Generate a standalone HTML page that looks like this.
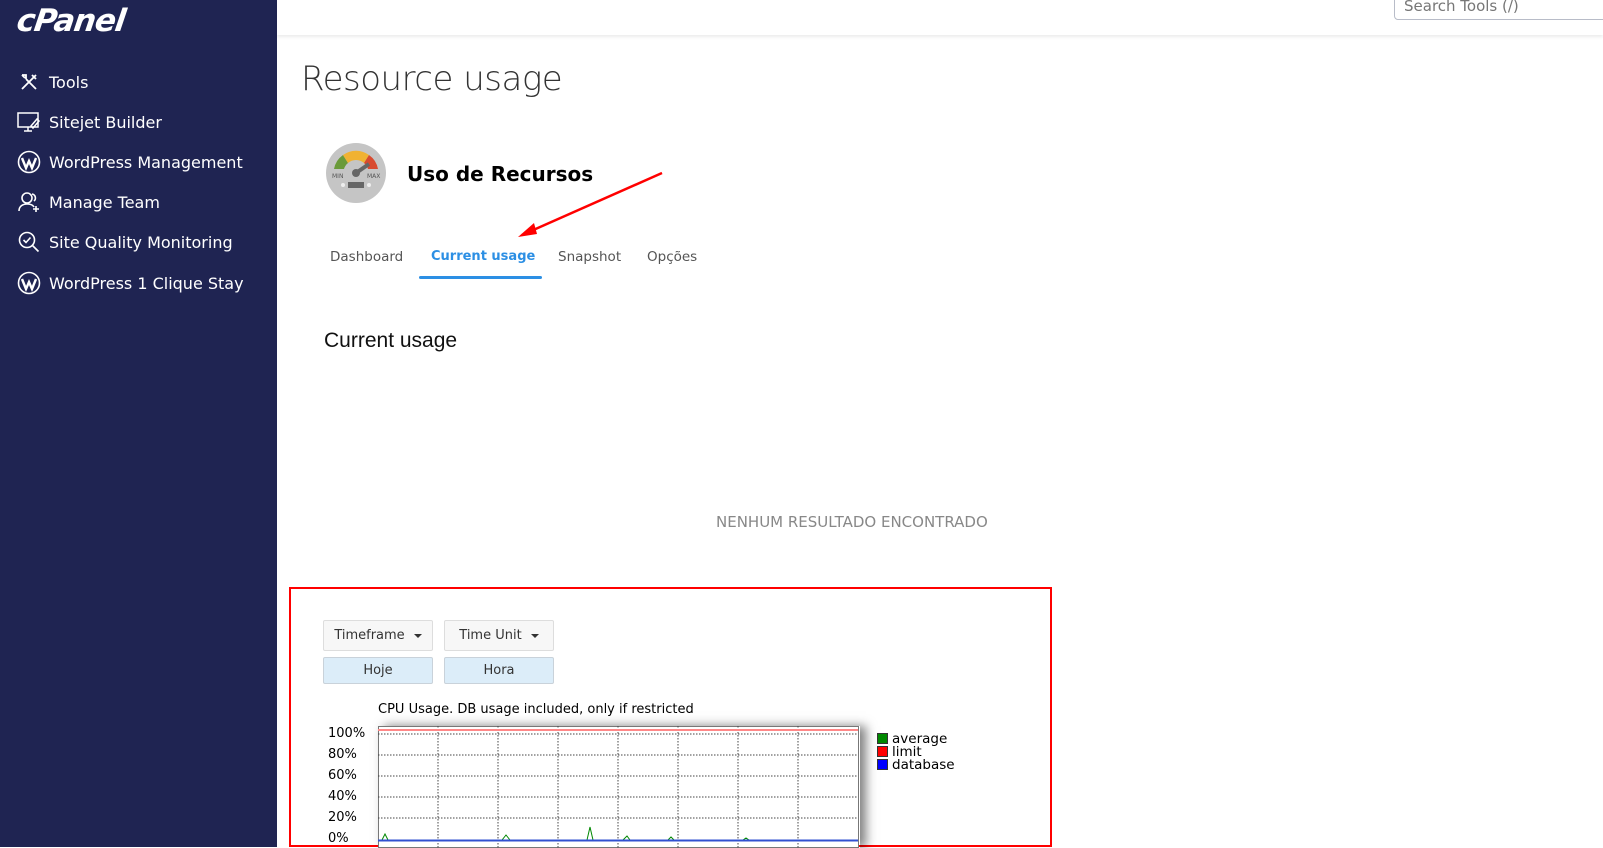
<!DOCTYPE html>
<html><head><meta charset="utf-8"><style>
*{margin:0;padding:0;box-sizing:border-box}
body{width:1603px;height:847px;overflow:hidden;background:#fff;font-family:"Liberation Sans","DejaVu Sans",sans-serif;position:relative}
.sb{position:absolute;left:0;top:0;width:277px;height:847px;background:#1f2452}
.logo{position:absolute;left:17px;top:3px;color:#fff;font:italic 900 31px "DejaVu Sans",sans-serif;letter-spacing:-1px;transform:skewX(-8deg)}
.it{position:absolute;left:17px;color:#fff;font:16px "DejaVu Sans",sans-serif;display:flex;align-items:center;height:24px}
.it svg{width:24px;height:24px;margin-right:8px;flex:none}
.hdr{position:absolute;left:277px;top:0;right:0;height:35px;background:#fff;box-shadow:0 2px 3px rgba(0,0,0,.08)}
.search{position:absolute;left:1394px;top:-12px;width:230px;height:32px;border:1px solid #b8bcc8;border-radius:4px;color:#777;font:15px "DejaVu Sans",sans-serif;padding:8px 0 0 9px}
.abs{position:absolute;white-space:nowrap}
.tab{position:absolute;top:249px;font:13.5px "DejaVu Sans",sans-serif;color:#555}
.btn{position:absolute;width:110px;height:31px;border:1px solid #ddd;background:#f7f7f7;font:13px "DejaVu Sans",sans-serif;color:#333;text-align:center;line-height:29px;border-radius:2px}
.btn2{background:#dcedf9;height:27px;line-height:25px;border-color:#c9d2da}
.car{display:inline-block;width:0;height:0;border-left:4px solid transparent;border-right:4px solid transparent;border-top:4px solid #333;margin-left:9px;vertical-align:middle}
.yl{position:absolute;left:328px;font:13px "DejaVu Sans",sans-serif;color:#000}
</style></head><body>
<div class="sb">
<div class="logo">cPanel</div>
<div class="it" style="top:70px"><svg viewBox="0 0 24 24" fill="none" stroke="#fff" stroke-width="1.8"><path d="M5 19L19 5M15 5l4 4M5 5l4 0 0 4M9 9l10 10M5 5l3 3"/></svg>Tools</div>
<div class="it" style="top:110px"><svg viewBox="0 0 24 24" fill="none" stroke="#fff" stroke-width="1.5"><rect x="1" y="3" width="20" height="14"/><path d="M7 21h8M11 17v4M14 16l6-7 2 2-6 7z"/></svg>Sitejet Builder</div>
<div class="it" style="top:150px"><svg viewBox="0 0 24 24"><circle cx="12" cy="12" r="10.5" fill="none" stroke="#fff" stroke-width="1.6"/><path d="M5 8l4 10 3-7 3 7 4-10" fill="none" stroke="#fff" stroke-width="2.4"/></svg>WordPress Management</div>
<div class="it" style="top:190px"><svg viewBox="0 0 24 24" fill="none" stroke="#fff" stroke-width="1.6"><circle cx="10" cy="8" r="5"/><path d="M2 21c0-5 4-7 8-7s6 1 7 3M15 4a4 4 0 0 1 2 7M19 16v6M16 19h6"/></svg>Manage Team</div>
<div class="it" style="top:230px"><svg viewBox="0 0 24 24" fill="none" stroke="#fff" stroke-width="1.6"><circle cx="10" cy="10" r="7.5"/><path d="M6.5 10l2.5 2.5 4.5-5M15.5 15.5l6 6"/></svg>Site Quality Monitoring</div>
<div class="it" style="top:271px"><svg viewBox="0 0 24 24"><circle cx="12" cy="12" r="10.5" fill="none" stroke="#fff" stroke-width="1.6"/><path d="M5 8l4 10 3-7 3 7 4-10" fill="none" stroke="#fff" stroke-width="2.4"/></svg>WordPress 1 Clique Stay</div>
</div>
<div class="hdr"></div>
<div class="search">Search Tools (/)</div>
<div class="abs" style="left:301px;top:59px;font:34px 'DejaVu Sans',sans-serif;font-weight:300;color:#333;letter-spacing:-.5px">Resource usage</div>
<svg class="abs" style="left:325px;top:142px" width="62" height="62" viewBox="0 0 62 62">
<circle cx="31" cy="31" r="30" fill="#c5c5c5"/>
<path d="M9 27A22 22 0 0 1 18 13L23 21A12 12 0 0 0 19 27z" fill="#6a9a3a"/>
<path d="M18 13A22 22 0 0 1 44 13L39 21A12 12 0 0 0 23 21z" fill="#f0b232"/>
<path d="M44 13A22 22 0 0 1 53 27L43 27A12 12 0 0 0 39 21z" fill="#d84a2f"/>
<path d="M31 31L44 22" stroke="#666" stroke-width="4"/><circle cx="31" cy="31" r="4" fill="#666"/>
<text x="7" y="36" font-size="6" fill="#555" font-family="DejaVu Sans">MIN</text><text x="42" y="36" font-size="6" fill="#555" font-family="DejaVu Sans">MAX</text>
<rect x="23" y="40" width="16" height="6" fill="#666"/><circle cx="18" cy="43" r="2" fill="#eee"/><circle cx="44" cy="43" r="2" fill="#eee"/>
</svg>
<div class="abs" style="left:407px;top:162px;font:bold 20px 'DejaVu Sans',sans-serif;color:#000">Uso de Recursos</div>
<svg class="abs" style="left:510px;top:168px" width="160" height="75"><path d="M152 5L12 67" stroke="#f00" stroke-width="2.5"/><path d="M8 69L24 55L27 66z" fill="#f00"/></svg>
<div class="tab" style="left:330px">Dashboard</div>
<div class="tab" style="left:431px;color:#2c8fe4;font-weight:bold;font-size:13px">Current usage</div>
<div class="abs" style="left:419px;top:276px;width:123px;height:3px;background:#2c8fe4;border-radius:2px"></div>
<div class="tab" style="left:558px">Snapshot</div>
<div class="tab" style="left:647px">Opções</div>
<div class="abs" style="left:324px;top:329px;font:21px 'Liberation Sans',sans-serif;color:#111">Current usage</div>
<div class="abs" style="left:716px;top:513px;font:15px 'DejaVu Sans',sans-serif;color:#888">NENHUM RESULTADO ENCONTRADO</div>
<div class="abs" style="left:289px;top:587px;width:763px;height:260px;border:2.5px solid #f00"></div>
<div class="btn" style="left:323px;top:620px">Timeframe<span class="car"></span></div>
<div class="btn" style="left:444px;top:620px">Time Unit<span class="car"></span></div>
<div class="btn btn2" style="left:323px;top:657px">Hoje</div>
<div class="btn btn2" style="left:444px;top:657px">Hora</div>
<div class="abs" style="left:378px;top:702px;font:13px 'DejaVu Sans',sans-serif;color:#000">CPU Usage. DB usage included, only if restricted</div>
<div class="abs" style="left:378px;top:726px;width:482px;height:122px;box-shadow:6px 0 10px rgba(0,0,0,.5)"></div>
<svg class="abs" style="left:378px;top:726px" width="482" height="122">
<rect x="0.5" y="0.5" width="480" height="121" fill="#fff" stroke="#777"/>
<g stroke="#444" stroke-dasharray="1.5,1.5" stroke-width="1">
<path d="M0 8H480M0 29H480M0 50H480M0 71H480M0 92H480"/>
<path d="M60 0V122M120 0V122M180 0V122M240 0V122M300 0V122M360 0V122M420 0V122"/>
</g>
<path d="M0 4H480" stroke="#f88" stroke-width="2"/>
<path d="M0 114L4 114L7 108L10 114L124 114L128 109L132 114L209 114L212 101L215 114L245 114L249 110L252 114L290 114L293 111L296 114L365 114L368 112L371 114L480 114" fill="none" stroke="#080" stroke-width="1"/>
<path d="M0 114.5H480" stroke="#3050d0" stroke-width="2"/>
</svg>
<div class="yl" style="top:726px">100%</div>
<div class="yl" style="top:747px">80%</div>
<div class="yl" style="top:768px">60%</div>
<div class="yl" style="top:789px">40%</div>
<div class="yl" style="top:810px">20%</div>
<div class="yl" style="top:831px">0%</div>
<div class="abs" style="left:877px;top:733px;font:13.5px/13px 'DejaVu Sans',sans-serif;color:#000">
<div><span style="display:inline-block;width:11px;height:11px;background:#080;border:1px solid #333;margin-right:4px;vertical-align:-1px"></span>average</div>
<div><span style="display:inline-block;width:11px;height:11px;background:#f00;border:1px solid #333;margin-right:4px;vertical-align:-1px"></span>limit</div>
<div><span style="display:inline-block;width:11px;height:11px;background:#00f;border:1px solid #333;margin-right:4px;vertical-align:-1px"></span>database</div>
</div>
</body></html>
